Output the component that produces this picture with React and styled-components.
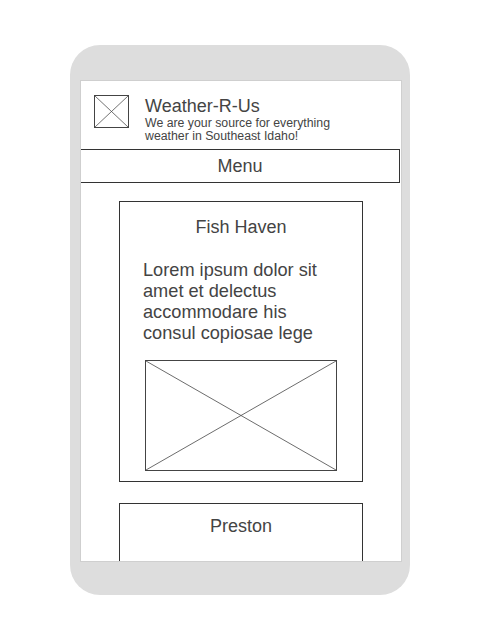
import React from "react";
import styled, { createGlobalStyle } from "styled-components";

const GlobalStyle = createGlobalStyle`
  html, body {
    margin: 0;
    padding: 0;
    background: #ffffff;
  }
  body {
    font-family: "Liberation Sans", Arial, sans-serif;
    color: #444444;
  }
`;

const Page = styled.div`
  width: 480px;
  height: 640px;
  padding-top: 45px;
  box-sizing: border-box;
`;

const Phone = styled.div`
  width: 340px;
  height: 550px;
  margin-left: 70px;
  padding: 35px 8px 0 10px;
  box-sizing: border-box;
  background: #dddddd;
  border-radius: 30px;
`;

const Screen = styled.div`
  width: 322px;
  height: 482px;
  box-sizing: border-box;
  background: #ffffff;
  border: 1px solid #cfcfcf;
  overflow: hidden;
  display: flex;
  flex-direction: column;
`;

const Header = styled.header`
  flex: none;
  display: flex;
  align-items: flex-start;
  gap: 16px;
  padding: 14px 0 0 13px;
  height: 68px;
  box-sizing: border-box;
`;

const Brand = styled.div`
  display: flex;
  flex-direction: column;
  padding-top: 1px;
`;

const Title = styled.h1`
  margin: 0;
  font-size: 18px;
  line-height: 21px;
  font-weight: normal;
  color: #444444;
`;

const Tagline = styled.p`
  margin: -0.5px 0 0;
  font-size: 12.3px;
  line-height: 13.5px;
  color: #444444;
  width: 200px;
`;

const Placeholder = styled.svg`
  display: block;
  flex: none;
  width: ${(p) => p.$w}px;
  height: ${(p) => p.$h}px;
  border: 1px solid #444444;
  box-sizing: border-box;
  margin: ${(p) => p.$margin || "0"};
`;

const MenuBar = styled.nav`
  flex: none;
  margin-left: -1px;
  width: 320px;
  height: 34px;
  box-sizing: border-box;
  border: 1px solid #333333;
  display: flex;
  align-items: center;
  justify-content: center;
  font-size: 18px;
  color: #444444;
`;

const Main = styled.main`
  display: flex;
  flex-direction: column;
  align-items: center;
  gap: 21px;
  padding: 18px 0 0 0;
`;

const Card = styled.section`
  width: 244px;
  box-sizing: border-box;
  border: 1px solid #333333;
  padding: ${(p) => p.$top}px 0 10px;
  display: flex;
  flex-direction: column;
  flex: none;
  min-height: ${(p) => p.$minHeight || 0}px;
`;

const CardTitle = styled.h2`
  margin: 0;
  text-align: center;
  font-size: 18px;
  line-height: 21px;
  font-weight: normal;
  color: #444444;
`;

const CardText = styled.p`
  margin: 22px 0 0 23px;
  width: 196px;
  font-size: 18.2px;
  line-height: 21px;
  color: #444444;
`;

const Cross = ({ w, h, margin }) => (
  <Placeholder
    $w={w}
    $h={h}
    $margin={margin}
    viewBox={`0 0 ${w} ${h}`}
    preserveAspectRatio="none"
  >
    <line x1="0" y1="0" x2={w} y2={h} stroke="#444" strokeWidth="0.8" />
    <line x1={w} y1="0" x2="0" y2={h} stroke="#444" strokeWidth="0.8" />
  </Placeholder>
);

const towns = [
  {
    name: "Fish Haven",
    text: "Lorem ipsum dolor sit amet et delectus accommodare his consul copiosae lege",
  },
  { name: "Preston", text: "" },
];

export default function App() {
  return (
    <Page>
      <GlobalStyle />
      <Phone>
        <Screen>
          <Header>
            <Cross w={35} h={33} />
            <Brand>
              <Title>Weather-R-Us</Title>
              <Tagline>
                We are your source for everything weather in Southeast Idaho!
              </Tagline>
            </Brand>
          </Header>
          <MenuBar>Menu</MenuBar>
          <Main>
            <Card $top={15}>
              <CardTitle>{towns[0].name}</CardTitle>
              <CardText>{towns[0].text}</CardText>
              <Cross w={192} h={111} margin="16px 0 0 25px" />
            </Card>
            <Card $top={12} $minHeight={120}>
              <CardTitle>{towns[1].name}</CardTitle>
            </Card>
          </Main>
        </Screen>
      </Phone>
    </Page>
  );
}
